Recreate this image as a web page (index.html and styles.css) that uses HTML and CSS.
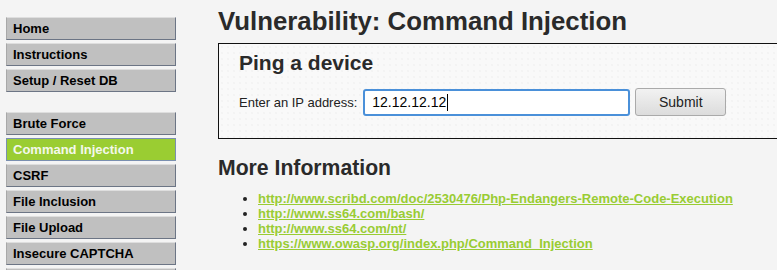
FILE: index.html
```html
<!DOCTYPE html>
<html lang="en">
<head>
    <meta charset="UTF-8">
    <title>Vulnerability: Command Injection</title>
    <link rel="stylesheet" href="styles.css">
</head>
<body>
    <div class="container">
        <div class="main-menu">
            <ul class="menu-block">
                <li><a href="#">Home</a></li>
                <li><a href="#">Instructions</a></li>
                <li><a href="#">Setup / Reset DB</a></li>
            </ul>
            <ul class="menu-block">
                <li><a href="#">Brute Force</a></li>
                <li class="selected"><a href="#">Command Injection</a></li>
                <li><a href="#">CSRF</a></li>
                <li><a href="#">File Inclusion</a></li>
                <li><a href="#">File Upload</a></li>
                <li><a href="#">Insecure CAPTCHA</a></li>
                <li><a href="#">SQL Injection</a></li>
            </ul>
        </div>
        <div class="main-body">
            <h1>Vulnerability: Command Injection</h1>
            <div class="vulnerable-code">
                <h2>Ping a device</h2>
                <form class="ping-form">
                    <label for="ip">Enter an IP address:</label>
                    <div class="ip-field">12.12.12.12<span class="caret"></span></div>
                    <button type="button" class="submit-btn">Submit</button>
                </form>
            </div>
            <h2 class="more-info">More Information</h2>
            <ul class="links">
                <li><a href="#">http://www.scribd.com/doc/2530476/Php-Endangers-Remote-Code-Execution</a></li>
                <li><a href="#">http://www.ss64.com/bash/</a></li>
                <li><a href="#">http://www.ss64.com/nt/</a></li>
                <li><a href="#">https://www.owasp.org/index.php/Command_Injection</a></li>
            </ul>
        </div>
    </div>
</body>
</html>
```

FILE: styles.css
```css
* {
    margin: 0;
    padding: 0;
    box-sizing: border-box;
}

body {
    background: #f4f4f4;
    font-family: "Liberation Sans", Arial, sans-serif;
    font-size: 13px;
    color: #222;
    overflow: hidden;
}

.container {
    display: flex;
}

/* Left menu */
.main-menu {
    width: 176px;
    flex-shrink: 0;
    padding: 17px 0 0 6px;
}

.menu-block {
    list-style: none;
    margin-bottom: 20px;
}

.menu-block li a {
    display: block;
    height: 23px;
    margin-bottom: 3px;
    padding: 3px 0 0 6px;
    background: #c0c0c0;
    border: 1px solid;
    border-color: #dedede #6c7585 #6c7585 #a8a8a8;
    color: #000;
    font-weight: bold;
    font-size: 13px;
    line-height: 16px;
    text-decoration: none;
}

.menu-block li.selected a {
    background: #9acd32;
    border-color: #7a8fb0;
    color: #f4f8ec;
}

/* Main body */
.main-body {
    flex: 1;
    padding: 6px 0 0 42px;
}

.main-body h1 {
    font-size: 25.8px;
    line-height: 30px;
    color: #2a2a2a;
    margin-bottom: 7px;
}

.vulnerable-code {
    margin-right: -10px;
    height: 96px;
    border: 1px solid #111;
    background-color: #f9f9f9;
    background-image: radial-gradient(#ececec 0.6px, transparent 0.8px);
    background-size: 6px 6px;
    padding: 7px 20px 0;
}

.vulnerable-code h2 {
    font-size: 21px;
    line-height: 24px;
    color: #2a2a2a;
    margin-bottom: 13px;
}

.ping-form {
    display: flex;
    align-items: center;
}

.ping-form label {
    font-size: 13px;
    color: #222;
    margin-right: 6px;
}

.ip-field {
    width: 267px;
    height: 27px;
    border: 2px solid #4a90d9;
    border-radius: 3px;
    background: #fff;
    padding: 0 7px;
    font-size: 14px;
    line-height: 23px;
    color: #000;
    display: flex;
    align-items: center;
}

.caret {
    display: inline-block;
    width: 1px;
    height: 17px;
    background: #000;
    margin-left: 1px;
}

.submit-btn {
    width: 91px;
    height: 28px;
    margin-left: 5px;
    border: 1px solid #aaa;
    border-radius: 3px;
    background: linear-gradient(#f2f2f2, #dcdcdc);
    font-family: "Liberation Sans", Arial, sans-serif;
    font-size: 14px;
    color: #222;
}

.more-info {
    font-size: 21.2px;
    line-height: 24px;
    color: #2a2a2a;
    margin-top: 17px;
    margin-bottom: 11px;
}

.links {
    padding-left: 40px;
}

.links li {
    line-height: 15px;
    font-size: 13px;
}

.links a {
    color: #99cc33;
    font-weight: bold;
    text-decoration: underline;
}
```
